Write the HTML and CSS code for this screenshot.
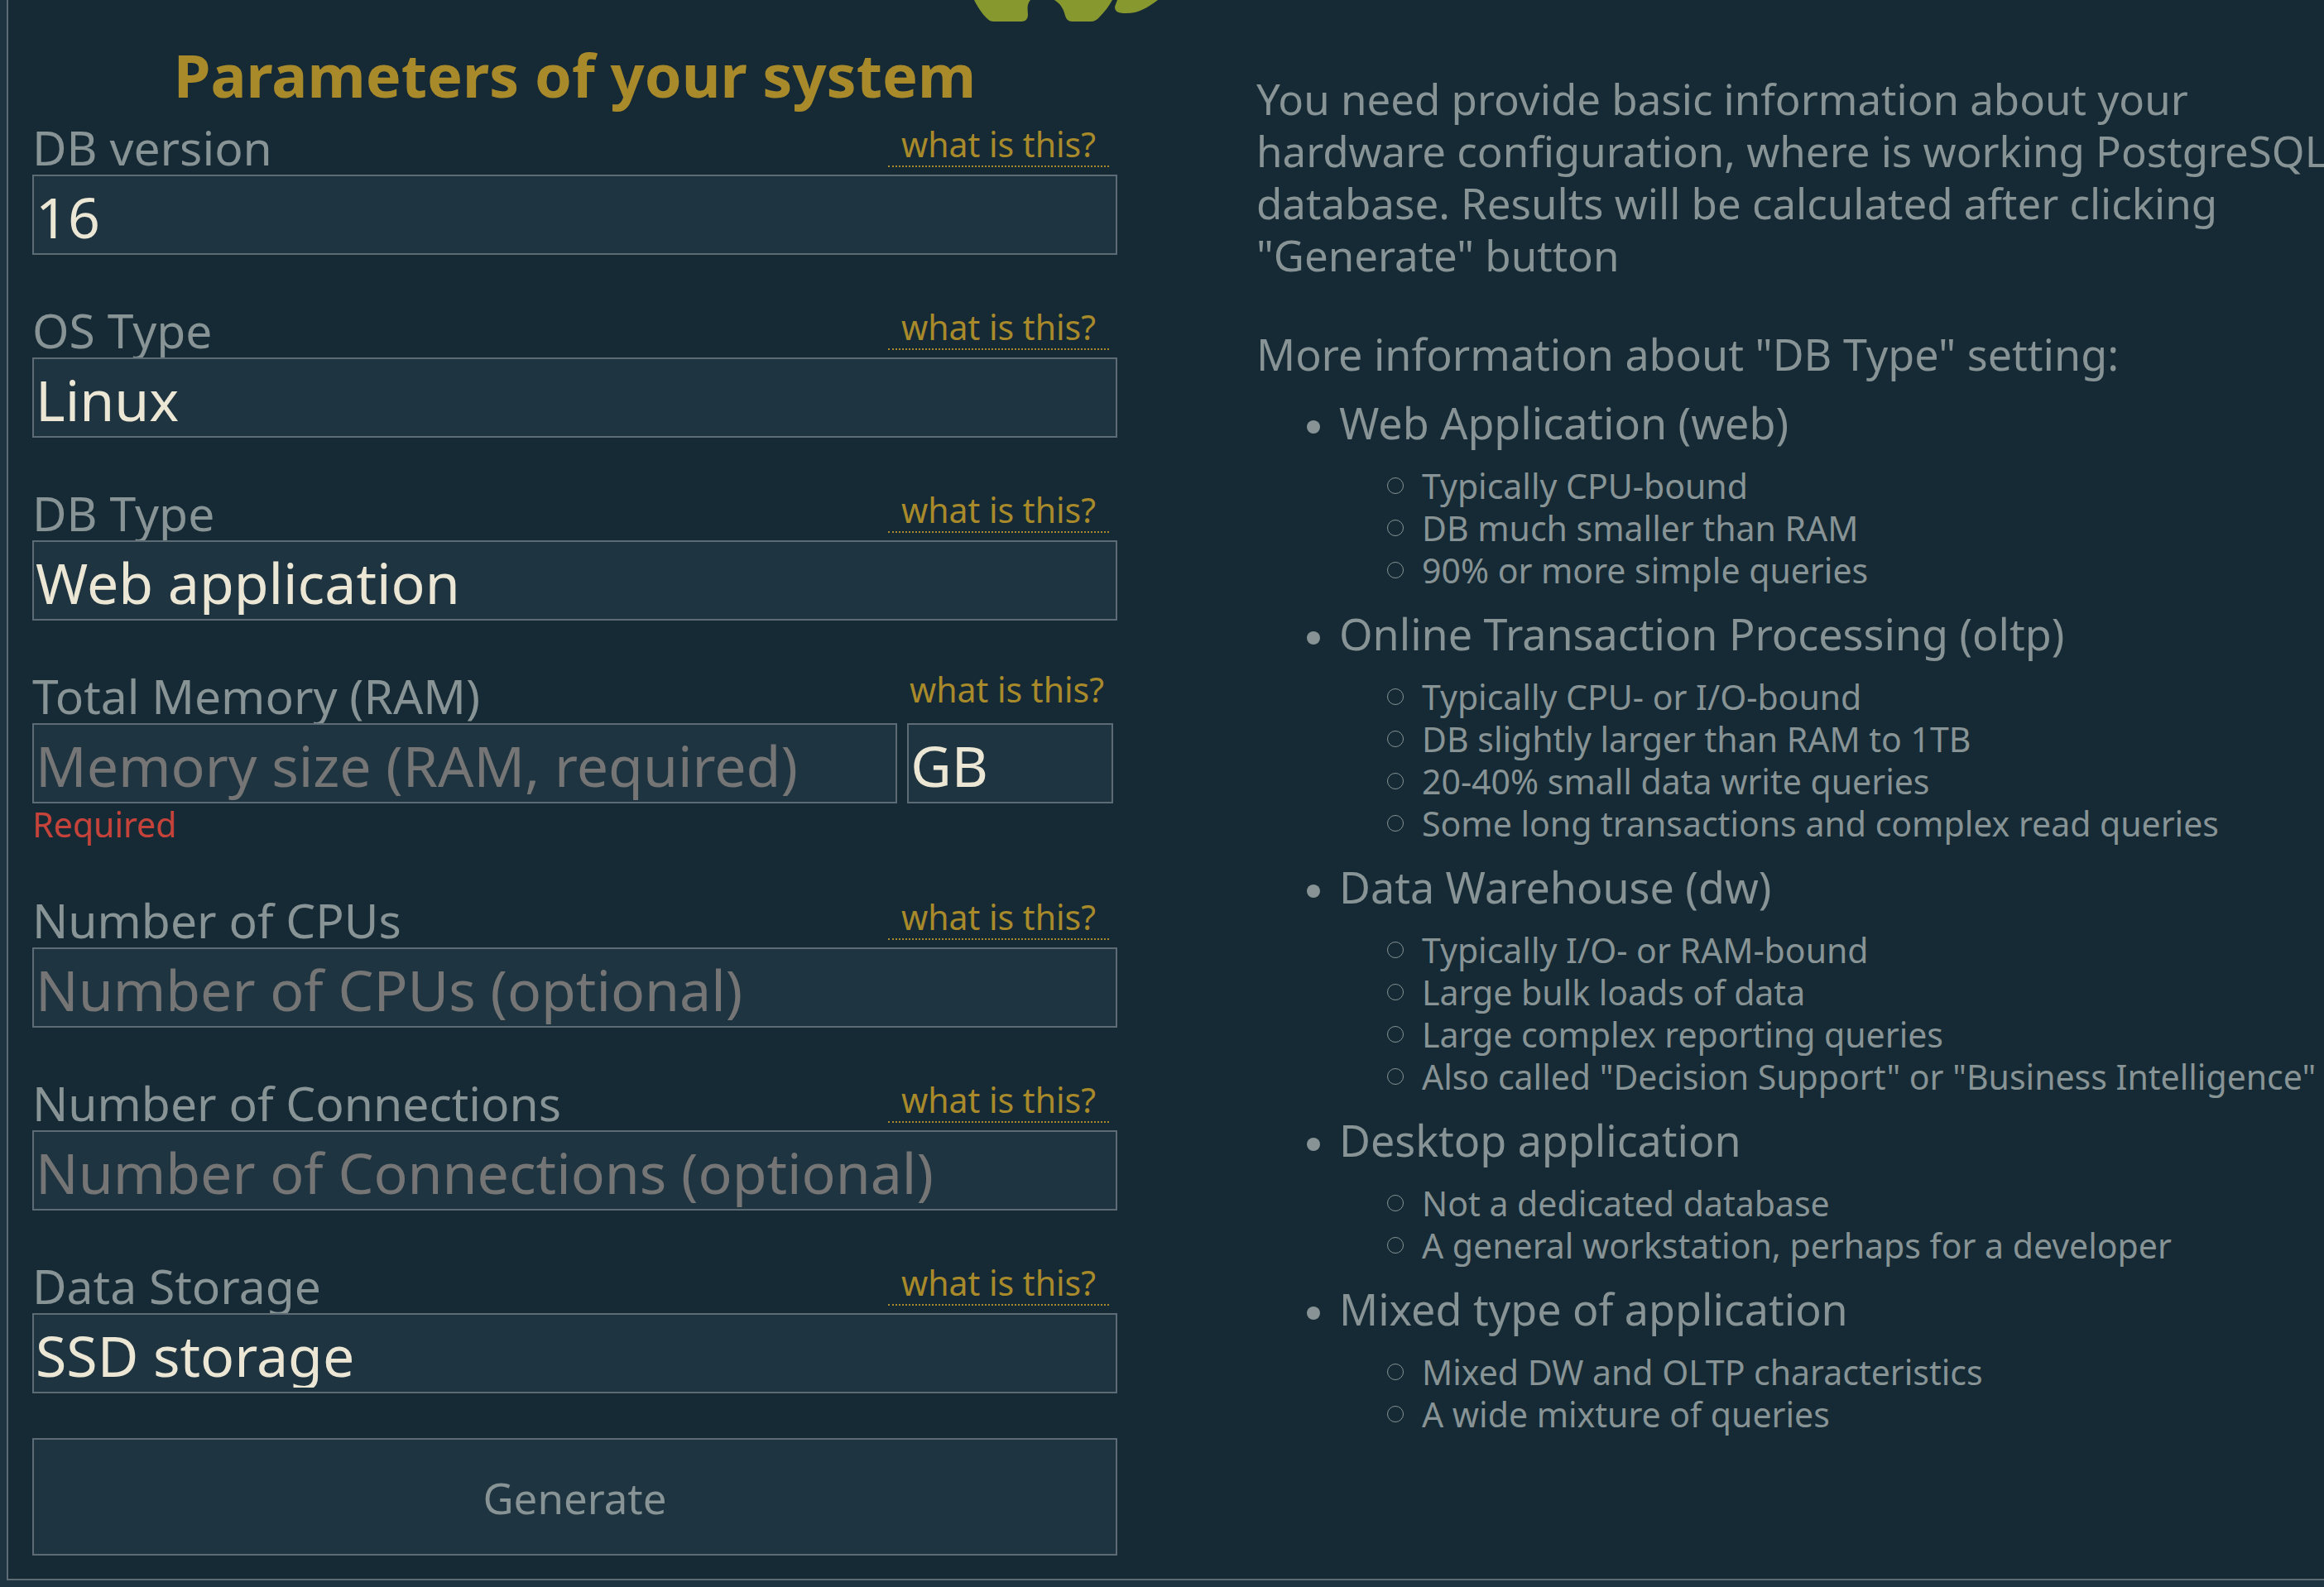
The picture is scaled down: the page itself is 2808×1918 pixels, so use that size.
FILE: index.html
```html
<!DOCTYPE html>
<html lang="en">
<head>
<meta charset="utf-8">
<title>PGTune</title>
<link rel="stylesheet" href="styles.css">
</head>
<body>
<div class="page">
  <header class="page-header">
    <svg class="logo" width="534" height="26" viewBox="0 0 534 26" aria-hidden="true">
      <path d="M0 0C6 12 14 22 19 25Q21 26 24 26H58Q65 25 65 18C65 12 63 6 68 0Z"/>
      <path d="M97 0C105 5 108 11 110 19Q112 26 118 26H141Q147 26 152 20C158 14 163 7 167 0Z"/>
      <path d="M173 0L170 8Q169 15 180 16C198 17 208 10 222 0Z"/>
    </svg>
  </header>
  <main class="columns">
    <form class="config">
      <h2 class="config-title">Parameters of your system</h2>

      <div class="field">
        <div class="field-head"><label class="label" for="db-version">DB version</label><a class="help" href="#db-version">what is this?</a></div>
        <select class="control" id="db-version"><option>16</option></select>
      </div>

      <div class="field">
        <div class="field-head"><label class="label" for="os-type">OS Type</label><a class="help" href="#os-type">what is this?</a></div>
        <select class="control" id="os-type"><option>Linux</option></select>
      </div>

      <div class="field">
        <div class="field-head"><label class="label" for="db-type">DB Type</label><a class="help" href="#db-type">what is this?</a></div>
        <select class="control" id="db-type"><option>Web application</option></select>
      </div>

      <div class="field">
        <div class="field-head"><label class="label" for="memory">Total Memory (RAM)</label><a class="help help-plain" href="#memory">what is this?</a></div>
        <div class="control-pair">
          <input class="control" id="memory" type="text" placeholder="Memory size (RAM, required)">
          <select class="control" aria-label="Memory unit"><option>GB</option></select>
        </div>
        <p class="error">Required</p>
      </div>

      <div class="field">
        <div class="field-head"><label class="label" for="cpus">Number of CPUs</label><a class="help" href="#cpus">what is this?</a></div>
        <input class="control" id="cpus" type="text" placeholder="Number of CPUs (optional)">
      </div>

      <div class="field">
        <div class="field-head"><label class="label" for="connections">Number of Connections</label><a class="help" href="#connections">what is this?</a></div>
        <input class="control" id="connections" type="text" placeholder="Number of Connections (optional)">
      </div>

      <div class="field">
        <div class="field-head"><label class="label" for="storage">Data Storage</label><a class="help" href="#storage">what is this?</a></div>
        <select class="control" id="storage"><option>SSD storage</option></select>
      </div>

      <button class="generate" type="button">Generate</button>
    </form>

    <section class="info">
      <p class="intro">You need provide basic information about your hardware configuration, where is working PostgreSQL database. Results will be calculated after clicking "Generate" button</p>
      <p class="more">More information about "DB Type" setting:</p>
      <ul class="types">
        <li>Web Application (web)
          <ul class="traits">
            <li>Typically CPU-bound</li>
            <li>DB much smaller than RAM</li>
            <li>90% or more simple queries</li>
          </ul>
        </li>
        <li>Online Transaction Processing (oltp)
          <ul class="traits">
            <li>Typically CPU- or I/O-bound</li>
            <li>DB slightly larger than RAM to 1TB</li>
            <li>20-40% small data write queries</li>
            <li>Some long transactions and complex read queries</li>
          </ul>
        </li>
        <li>Data Warehouse (dw)
          <ul class="traits">
            <li>Typically I/O- or RAM-bound</li>
            <li>Large bulk loads of data</li>
            <li>Large complex reporting queries</li>
            <li>Also called "Decision Support" or "Business Intelligence"</li>
          </ul>
        </li>
        <li>Desktop application
          <ul class="traits">
            <li>Not a dedicated database</li>
            <li>A general workstation, perhaps for a developer</li>
          </ul>
        </li>
        <li>Mixed type of application
          <ul class="traits">
            <li>Mixed DW and OLTP characteristics</li>
            <li>A wide mixture of queries</li>
          </ul>
        </li>
      </ul>
    </section>
  </main>
</div>
</body>
</html>
```
FILE: styles.css
```css
:root {
  --bg: #152a35;
  --panel: #1e3440;
  --line: #5d6c74;
  --text: #879394;
  --bright: #ece6d5;
  --accent: #a98a2b;
  --error: #c5433a;
  --logo: #87982f;
}

* {
  box-sizing: border-box;
}

html {
  overflow-x: hidden;
}

body {
  margin: 0;
  padding: 0 0 8px 8px;
  overflow-x: hidden;
  background: var(--panel);
  color: var(--text);
  font-family: "Noto Sans", "Open Sans", sans-serif;
}

h2,
p,
ul {
  margin: 0;
  padding: 0;
}

/* The page runs a little past the right edge of the window */
.page {
  margin-right: -40px;
  padding: 0 0 28px 29px;
  border: 2px solid var(--line);
  border-width: 0 0 2px 2px;
  background: var(--bg);
}

.page-header {
  display: flex;
  justify-content: center;
}

.logo {
  display: block;
  fill: var(--logo);
}

.columns {
  display: grid;
  grid-template-columns: 1311fr 1330fr;
  column-gap: 168px;
  align-items: start;
}

/* Form */
.config-title {
  margin: 16px 0 13px;
  color: var(--accent);
  font-size: 72px;
  line-height: 96px;
  text-align: center;
}

.field {
  display: flex;
  flex-direction: column;
  margin-bottom: 64px;
}

.field-head {
  display: flex;
  justify-content: space-between;
  align-items: flex-start;
  height: 60px;
}

.label {
  font-size: 57px;
  line-height: 54px;
}

.help {
  margin-right: 10px;
  padding: 0 16px 3px;
  border-bottom: 2px dotted var(--accent);
  color: var(--accent);
  font-size: 41px;
  line-height: 46px;
  text-decoration: none;
}

.help-plain {
  margin-right: 0;
  border-bottom: 0;
  line-height: 38px;
}

.control {
  width: 100%;
  height: 97px;
  margin: 0;
  padding: 4px 0 0 2px;
  border: 2px solid var(--line);
  border-radius: 0;
  outline: 0;
  appearance: none;
  background: var(--panel);
  color: var(--bright);
  font-family: inherit;
  font-size: 68px;
}

select.control {
  padding: 9px 0 5px 2px;
  line-height: 79px;
}

.control::placeholder {
  color: #757575;
  opacity: 1;
}

.control-pair {
  display: grid;
  grid-template-columns: 1046fr 249fr;
  gap: 12px;
  padding-right: 5px;
}

.error {
  color: var(--error);
  font-size: 41px;
  line-height: 50px;
}

.generate {
  display: block;
  width: 100%;
  height: 142px;
  margin-top: -10px;
  padding: 2px 0 0;
  border: 2px solid var(--line);
  border-radius: 0;
  background: var(--panel);
  color: var(--text);
  font-family: inherit;
  font-size: 51px;
}

/* Description */
.info {
  padding-top: 62px;
  font-size: 52px;
  line-height: 63px;
}

.intro {
  font-size: 51px;
}

.more {
  margin-top: 56px;
}

.types,
.traits {
  list-style: none;
}

.types {
  padding-left: 100px;
}

.types > li {
  margin-top: 20px;
}

.types > li::before,
.traits > li::before {
  content: "";
  display: inline-block;
  border-radius: 50%;
}

.types > li::before {
  width: 16px;
  height: 16px;
  margin: 0 23px 0 -39px;
  background: var(--text);
  vertical-align: 7px;
}

.traits {
  margin: 20px 0 -1px;
  padding-left: 98px;
  font-size: 41px;
  line-height: 51px;
  white-space: nowrap;
}

.traits > li::before {
  width: 18px;
  height: 18px;
  margin: 0 22px 0 -40px;
  border: 1px solid var(--text);
  vertical-align: 6px;
}
```
